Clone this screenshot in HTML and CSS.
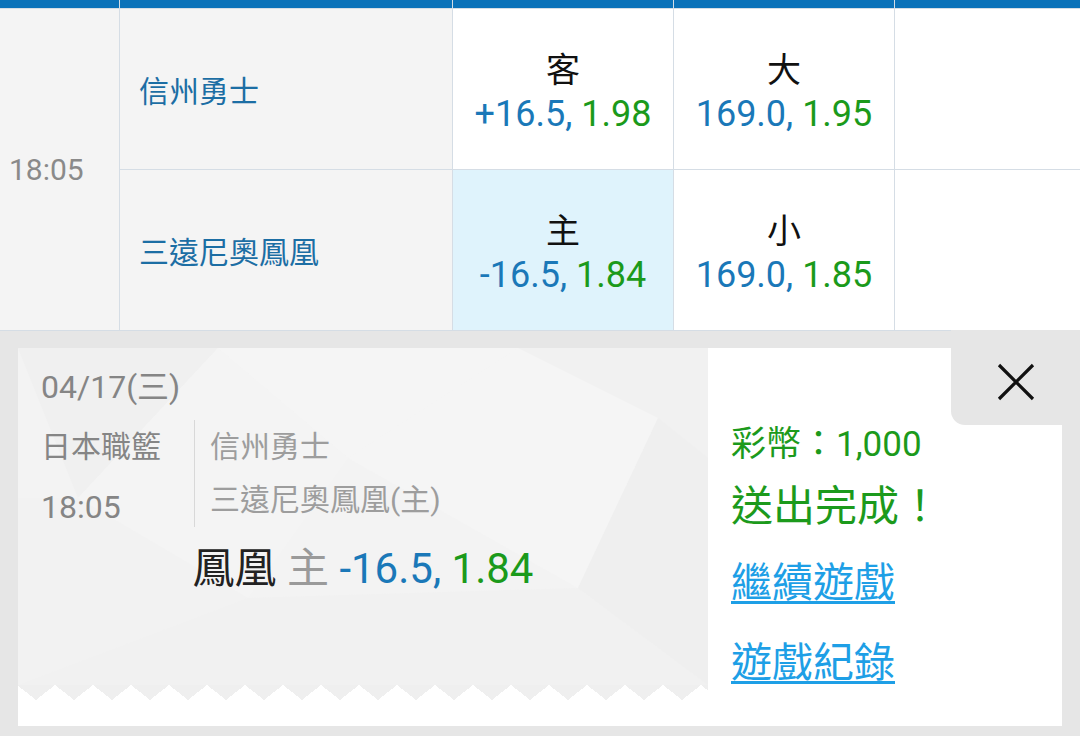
FILE: index.html
```html
<!DOCTYPE html>
<html lang="zh-Hant">
<head>
  <meta charset="UTF-8">
  <title>投注完成</title>
  <link rel="stylesheet" href="styles.css">
</head>
<body>
  <div class="odds">
    <div class="head"></div>
    <div class="head"></div>
    <div class="head"></div>
    <div class="head"></div>
    <div class="head"></div>

    <div class="time">18:05</div>

    <div class="team">信州勇士</div>
    <div class="pick">
      <span class="side">客</span>
      <span class="line"><span class="spread">+16.5,</span> <span class="rate">1.98</span></span>
    </div>
    <div class="pick">
      <span class="side">大</span>
      <span class="line"><span class="spread">169.0,</span> <span class="rate">1.95</span></span>
    </div>
    <div class="pick"></div>

    <div class="team">三遠尼奧鳳凰</div>
    <div class="pick selected">
      <span class="side">主</span>
      <span class="line"><span class="spread">-16.5,</span> <span class="rate">1.84</span></span>
    </div>
    <div class="pick">
      <span class="side">小</span>
      <span class="line"><span class="spread">169.0,</span> <span class="rate">1.85</span></span>
    </div>
    <div class="pick"></div>
  </div>

  <div class="result">
    <div class="card">
      <div class="ticket">
        <div class="ticket-body">
          <svg class="facets" viewBox="0 0 690 337" preserveAspectRatio="none">
            <rect width="690" height="337" fill="#f3f3f3"/>
            <polygon points="0,0 200,0 60,150" fill="#f0f0f0"/>
            <polygon points="200,0 500,0 330,110" fill="#f5f5f5"/>
            <polygon points="60,150 200,0 330,110 230,250" fill="#f4f4f4"/>
            <polygon points="500,0 690,0 690,110 640,70" fill="#f1f1f1"/>
            <polygon points="330,110 500,0 640,70 560,240" fill="#f5f5f5"/>
            <polygon points="0,150 60,150 230,250 0,337" fill="#f2f2f2"/>
            <polygon points="230,250 560,240 690,337 0,337" fill="#f1f1f1"/>
            <polygon points="640,70 690,110 690,337 560,240" fill="#efefef"/>
          </svg>

          <div class="date">04/17(三)</div>
          <div class="match">
            <div class="meta">
              <div>日本職籃</div>
              <div class="latin">18:05</div>
            </div>
            <div class="teams">
              <div>信州勇士</div>
              <div>三遠尼奧鳳凰(主)</div>
            </div>
          </div>
          <div class="bet">
            <span class="name">鳳凰</span>
            <span class="side">主</span>
            <span class="spread">-16.5,</span> <span class="rate">1.84</span>
          </div>
        </div>
        <div class="zigzag"></div>
      </div>

      <div class="receipt">
        <div class="coins">彩幣：1,000</div>
        <div class="done">送出完成！</div>
        <a class="again" href="#">繼續遊戲</a>
        <a class="history" href="#">遊戲紀錄</a>
      </div>

      <button class="close" type="button">
        <svg width="38" height="38" viewBox="0 0 38 38">
          <path d="M2 2 L36 36 M36 2 L2 36" stroke="#111" stroke-width="3.2" fill="none"/>
        </svg>
      </button>
    </div>
  </div>
</body>
</html>
```

FILE: styles.css
```css
body {
  margin: 0;
  width: 1080px;
  height: 736px;
  overflow: hidden;
  background: #e6e6e6;
  font-family: Roboto, "Noto Sans CJK TC", sans-serif;
}

/* odds table */
.odds {
  display: grid;
  grid-template-columns: 119px 332px 220px 220px 1fr;
  grid-template-rows: 8px 160px 160px;
  gap: 1px;
  padding-bottom: 1px;
  background: #d5dde5;
}

.head {
  background: #0b72b9;
}

.time {
  grid-column: 1;
  grid-row: 2 / 4;
  display: flex;
  align-items: center;
  padding-left: 9px;
  background: #f4f4f4;
  color: #8a8a8a;
  font-size: 30px;
}

.team {
  display: flex;
  align-items: center;
  padding: 0 0 0 19px;
  background: #f4f4f4;
  color: #1c6ea4;
  font-size: 30px;
}

.pick {
  display: flex;
  flex-direction: column;
  align-items: center;
  justify-content: center;
  padding-top: 6px;
  background: #fff;
}

.pick.selected {
  background: #dff3fc;
}

.pick .side {
  font-size: 34px;
  line-height: 44px;
  color: #111;
}

.pick .line {
  font-size: 36px;
  line-height: 44px;
}

.spread {
  color: #1a78b8;
}

.rate {
  color: #1b9a1b;
}

/* bet result */
.result {
  padding: 17px 18px 10px;
}

.card {
  position: relative;
  display: flex;
  height: 378px;
}

.ticket {
  width: 690px;
  padding-bottom: 26px;
  background: #fff;
}

.ticket-body {
  position: relative;
  height: 337px;
  box-sizing: border-box;
  padding: 19px 0 0 23px;
  overflow: hidden;
  background: #f3f3f3;
}

.facets {
  position: absolute;
  top: 0;
  left: 0;
  width: 100%;
  height: 100%;
}

.date,
.match,
.bet {
  position: relative;
}

.date {
  font-size: 32px;
  line-height: 40px;
  color: #858585;
}

.match {
  display: flex;
  margin-top: 13px;
}

.meta {
  display: flex;
  flex-direction: column;
  gap: 20px;
  width: 153px;
  padding-top: 7px;
  font-size: 30px;
  line-height: 40px;
  color: #858585;
}

.meta .latin {
  font-size: 32px;
}

.teams {
  padding-left: 15px;
  border-left: 1px solid #d8d8d8;
  font-size: 30px;
  line-height: 53px;
  color: #9d9d9d;
}

.bet {
  margin: 17px 0 0 -23px;
  text-align: center;
  font-size: 42px;
  line-height: 50px;
}

.bet .name {
  color: #222;
}

.bet .side {
  color: #9a9a9a;
}

.zigzag {
  height: 15px;
  background: conic-gradient(from -51.7deg at 50% 100%, #efefef 103.4deg, #fff 0);
  background-size: 38px 15px;
  background-position: 37px 0;
}

.receipt {
  flex: 1;
  display: flex;
  flex-direction: column;
  align-items: flex-start;
  padding: 77px 0 0 23px;
  background: #fff;
}

.coins {
  font-size: 35px;
  line-height: 40px;
  color: #1c9a1c;
}

.done {
  margin-top: 17px;
  font-size: 42px;
  line-height: 50px;
  color: #1c9a1c;
}

.receipt a {
  font-size: 41px;
  line-height: 48px;
  color: #1e9fe6;
  text-decoration: underline;
  text-decoration-thickness: 3px;
  text-underline-offset: 4px;
}

.again {
  margin-top: 27px;
}

.history {
  margin-top: 32px;
}

.close {
  position: absolute;
  top: -18px;
  right: -18px;
  width: 129px;
  height: 95px;
  display: flex;
  align-items: center;
  justify-content: center;
  padding: 9px 0 0;
  border: none;
  border-bottom-left-radius: 14px;
  background: #e6e6e6;
  cursor: pointer;
}
```
